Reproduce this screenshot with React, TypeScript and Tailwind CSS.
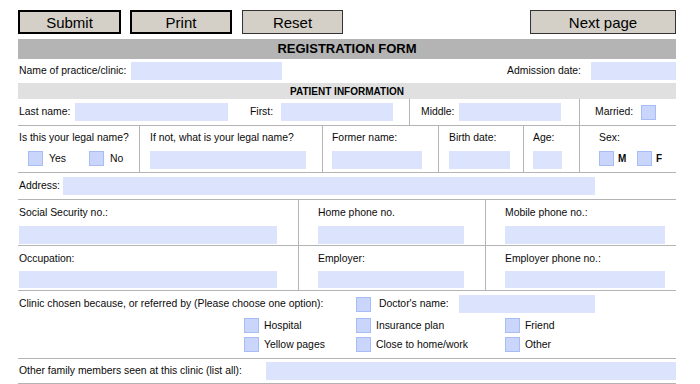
import React from "react";

const line = "border-[#b4b4b4]";

function Field({ w, h = 18, className = "" }: { w: number; h?: number; className?: string }) {
  return <div className={`bg-[#dce3fd] shrink-0 ${className}`} style={{ width: w, height: h }} />;
}

function Box({ className = "" }: { className?: string }) {
  return <div className={`w-[15px] h-[15px] shrink-0 bg-[#cad5fc] border border-[#a8bdf6] ${className}`} />;
}

function Btn({ label, w, thick = true }: { label: string; w: number; thick?: boolean }) {
  return (
    <button
      className={`h-[24px] bg-[#d4d0c8] text-[15px] leading-none text-black flex items-center justify-center ${
        thick ? "border-2 border-black" : "border border-[#333]"
      }`}
      style={{ width: w }}
    >
      {label}
    </button>
  );
}

export default function App() {
  return (
    <div className="w-[700px] h-[384px] bg-white overflow-hidden whitespace-nowrap font-['Liberation_Sans',Arial,sans-serif] text-[10.4px] text-[#0a0a0a]">
      <div className="ml-[18px] w-[658px]">
        {/* Buttons */}
        <div className="flex items-center pt-[10px] h-[34px]">
          <Btn label="Submit" w={103} />
          <div className="ml-[9px]">
            <Btn label="Print" w={102} />
          </div>
          <div className="ml-[10px]">
            <Btn label="Reset" w={101} thick={false} />
          </div>
          <div className="ml-auto">
            <Btn label="Next page" w={146} thick={false} />
          </div>
        </div>

        {/* Title */}
        <div className="mt-[5px] h-[20px] bg-[#b4b4b4] flex items-center justify-center font-bold text-[13px] text-black">
          REGISTRATION FORM
        </div>

        {/* Practice */}
        <div className="h-[24px] flex items-center">
          <span className="pl-[1px] w-[113px]">Name of practice/clinic:</span>
          <Field w={151} />
          <span className="ml-auto mr-[10px]">Admission date:</span>
          <Field w={85} />
        </div>

        {/* Patient information */}
        <div className="h-[16px] bg-[#e0e0e0] flex items-center justify-center font-bold text-[10px] text-black">
          PATIENT INFORMATION
        </div>

        {/* Names */}
        <div className={`h-[27px] flex border-b ${line}`}>
          <div className="w-[391px] flex items-center">
            <span className="pl-[1px] w-[57px]">Last name:</span>
            <Field w={153} />
            <span className="ml-[22px] w-[31px]">First:</span>
            <Field w={112} />
          </div>
          <div className={`w-[170px] flex items-center border-l ${line} pl-[11px]`}>
            <span className="w-[38px]">Middle:</span>
            <Field w={102} />
          </div>
          <div className={`flex-1 flex items-center border-l ${line} pl-[15px]`}>
            <span className="w-[46px]">Married:</span>
            <Box />
          </div>
        </div>

        {/* Legal name row */}
        <div className={`h-[47px] flex border-b ${line}`}>
          <div className="w-[121px] pt-[4px] pl-[1px]">
            <div>Is this your legal name?</div>
            <div className="flex items-center mt-[5px] pl-[9px]">
              <Box />
              <span className="ml-[6px] w-[40px]">Yes</span>
              <Box />
              <span className="ml-[6px]">No</span>
            </div>
          </div>
          <div className={`w-[183px] border-l ${line} pt-[4px] pl-[10px]`}>
            <div>If not, what is your legal name?</div>
            <Field w={156} className="mt-[5px]" />
          </div>
          <div className={`w-[116px] border-l ${line} pt-[4px] pl-[9px]`}>
            <div>Former name:</div>
            <Field w={90} className="mt-[5px]" />
          </div>
          <div className={`w-[85px] border-l ${line} pt-[4px] pl-[10px]`}>
            <div>Birth date:</div>
            <Field w={61} className="mt-[5px]" />
          </div>
          <div className={`w-[56px] border-l ${line} pt-[4px] pl-[9px]`}>
            <div>Age:</div>
            <Field w={29} className="mt-[5px]" />
          </div>
          <div className={`flex-1 border-l ${line} pt-[4px] pl-[19px]`}>
            <div>Sex:</div>
            <div className="flex items-center mt-[5px] font-bold text-[10px]">
              <Box />
              <span className="ml-[4px] w-[19px]">M</span>
              <Box />
              <span className="ml-[4px]">F</span>
            </div>
          </div>
        </div>

        {/* Address */}
        <div className={`h-[27px] flex items-center border-b ${line}`}>
          <span className="pl-[1px] w-[45px]">Address:</span>
          <Field w={532} />
        </div>

        {/* Phones */}
        <div className={`h-[46px] flex border-b ${line}`}>
          <div className="w-[280px] pt-[5px] pl-[1px]">
            <div>Social Security no.:</div>
            <Field w={258} className="mt-[5px]" />
          </div>
          <div className={`w-[187px] border-l ${line} pt-[5px] pl-[19px]`}>
            <div>Home phone no.</div>
            <Field w={146} className="mt-[5px]" />
          </div>
          <div className={`flex-1 border-l ${line} pt-[5px] pl-[19px]`}>
            <div>Mobile phone no.:</div>
            <Field w={160} className="mt-[5px]" />
          </div>
        </div>

        {/* Occupation */}
        <div className={`h-[45px] flex border-b ${line}`}>
          <div className="w-[280px] pt-[5px] pl-[1px]">
            <div>Occupation:</div>
            <Field w={258} h={17} className="mt-[4px]" />
          </div>
          <div className={`w-[187px] border-l ${line} pt-[5px] pl-[19px]`}>
            <div>Employer:</div>
            <Field w={146} h={17} className="mt-[4px]" />
          </div>
          <div className={`flex-1 border-l ${line} pt-[5px] pl-[19px]`}>
            <div>Employer phone no.:</div>
            <Field w={160} h={17} className="mt-[4px]" />
          </div>
        </div>

        {/* Referral */}
        <div className={`h-[68px] border-b ${line} pt-[4px]`}>
          <div className="flex items-center h-[18px]">
            <span className="pl-[1px] w-[338px]">Clinic chosen because, or referred by (Please choose one option):</span>
            <Box />
            <span className="ml-[8px] w-[80px]">Doctor's name:</span>
            <Field w={136} />
          </div>
          <div className="flex items-center mt-[5px] pl-[226px]">
            <div className="w-[112px] flex items-center">
              <Box />
              <span className="ml-[5px]">Hospital</span>
            </div>
            <div className="w-[149px] flex items-center">
              <Box />
              <span className="ml-[5px]">Insurance plan</span>
            </div>
            <div className="flex items-center">
              <Box />
              <span className="ml-[5px]">Friend</span>
            </div>
          </div>
          <div className="flex items-center mt-[3px] pl-[226px]">
            <div className="w-[112px] flex items-center">
              <Box />
              <span className="ml-[5px]">Yellow pages</span>
            </div>
            <div className="w-[149px] flex items-center">
              <Box />
              <span className="ml-[5px]">Close to home/work</span>
            </div>
            <div className="flex items-center">
              <Box />
              <span className="ml-[5px]">Other</span>
            </div>
          </div>
        </div>

        {/* Family */}
        <div className={`h-[25px] flex items-center border-b ${line}`}>
          <span className="pl-[1px] w-[248px]">Other family members seen at this clinic (list all):</span>
          <Field w={410} />
        </div>
      </div>
    </div>
  );
}
